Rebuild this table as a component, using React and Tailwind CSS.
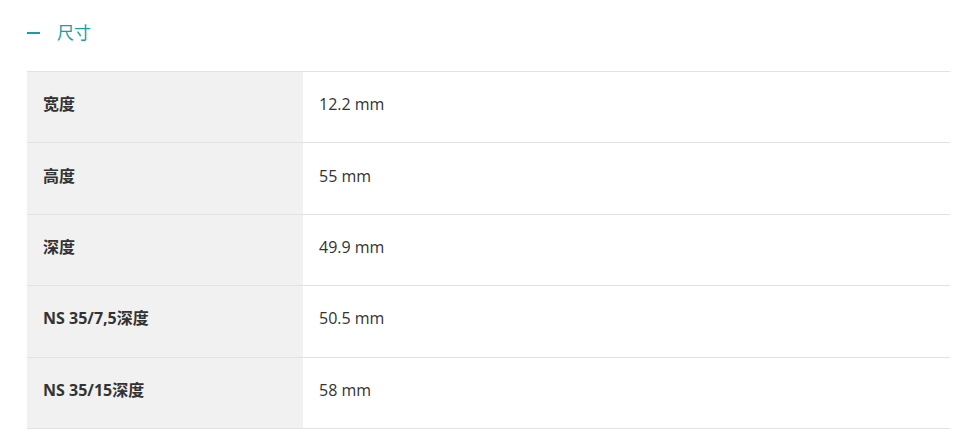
const rows = [
  { label: '宽度', value: '12.2 mm' },
  { label: '高度', value: '55 mm' },
  { label: '深度', value: '49.9 mm' },
  { label: 'NS 35/7,5深度', value: '50.5 mm' },
  { label: 'NS 35/15深度', value: '58 mm' },
]

export default function App() {
  return (
    <div
      className="min-h-screen w-full bg-white pl-[27px] pr-[13px]"
      style={{ fontFamily: '"Open Sans", "Noto Sans CJK SC", sans-serif' }}
    >
      {/* section header */}
      <div className="flex h-[71px] items-center pb-[5px]">
        <span className="h-[2px] w-[13px] bg-[#13a0a6]" />
        <span className="ml-[17px] text-[17px] text-[#13a0a6]">尺寸</span>
      </div>

      {/* spec table */}
      <div className="border-t border-[#e2e2e2]">
        {rows.map((row) => (
          <div key={row.label} className="flex h-[71.4px] border-b border-[#e2e2e2] text-[#333333]">
            <div className="flex w-[276px] items-center bg-[#f1f1f1] px-4 pb-[6px] text-[16px] font-bold">
              {row.label}
            </div>
            <div className="flex flex-1 items-center px-4 pb-[6px] text-[16px]">
              {row.value}
            </div>
          </div>
        ))}
      </div>
    </div>
  )
}
